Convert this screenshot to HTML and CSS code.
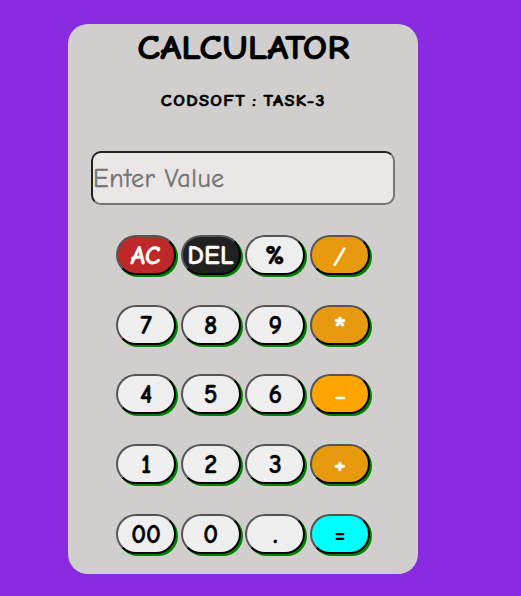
FILE: index.html
```html
<!DOCTYPE html>
<html lang="en">
<head>
<meta charset="utf-8">
<title>Calculator</title>
<link rel="stylesheet" href="styles.css">
</head>
<body>
<main class="calculator">
  <h1 class="title">CALCULATOR</h1>
  <h2 class="subtitle">CODSOFT : TASK-3</h2>
  <input class="display" type="text" placeholder="Enter Value">
  <div class="keys">
    <button class="key clear"><span class="wide slant">AC</span></button>
    <button class="key delete"><span class="wide">DEL</span></button>
    <button class="key"><span class="percent">%</span></button>
    <button class="key operator"><span class="divide">/</span></button>
    <button class="key">7</button>
    <button class="key">8</button>
    <button class="key">9</button>
    <button class="key operator"><span class="times">*</span></button>
    <button class="key">4</button>
    <button class="key">5</button>
    <button class="key">6</button>
    <button class="key operator minus"><span class="sign dash">-</span></button>
    <button class="key">1</button>
    <button class="key">2</button>
    <button class="key">3</button>
    <button class="key operator"><span class="sign">+</span></button>
    <button class="key"><span>00</span></button>
    <button class="key">0</button>
    <button class="key">.</button>
    <button class="key equals"><span class="equal">=</span></button>
  </div>
</main>
</body>
</html>
```
FILE: styles.css
```css
* {
  box-sizing: border-box;
}

body {
  margin: 0;
  padding-top: 24px;
  padding-left: 68px;
  height: 596px;
  overflow: hidden;
  background: blueviolet;
  font-family: "Comic Sans MS", "Comic Neue", "Noto Sans", sans-serif;
}

.calculator {
  width: 350px;
  height: 550px;
  border-radius: 20px;
  background: #d0cfcd;
  display: flex;
  flex-direction: column;
  align-items: center;
}

.title {
  margin: 0;
  height: 46px;
  font-size: 35px;
  line-height: 47px;
  font-weight: 700;
  transform: scaleX(1.09);
  -webkit-text-stroke: 0.7px;
}

.subtitle {
  margin: 21px 0 0;
  height: 20px;
  font-size: 16px;
  line-height: 21px;
  font-weight: 700;
  letter-spacing: 1.2px;
  word-spacing: -1.5px;
  transform: scaleX(1.14);
  -webkit-text-stroke: 0.6px;
}

.display {
  width: 304px;
  height: 54px;
  margin-top: 40px;
  padding: 2px 0 0;
  border: 2px solid;
  border-color: #212121 #767676 #767676 #212121;
  border-radius: 10px;
  background: #ebe7e6;
  font: 26px "Comic Sans MS", "Comic Neue", "Noto Sans", sans-serif;
  letter-spacing: 0.45px;
}

.display::placeholder {
  color: #757575;
  opacity: 1;
  -webkit-text-stroke: 0.4px;
}

.keys {
  display: grid;
  grid-template-columns: repeat(4, 60px);
  column-gap: 4.67px;
  row-gap: 29.7px;
  margin-top: 30px;
}

.key {
  width: 60px;
  height: 40px;
  padding: 0;
  border: 2px solid;
  border-color: #555 #000 #000 #555;
  border-radius: 20px;
  background: #efefef;
  color: #000;
  box-shadow: 2px 2px 0 green;
  font: 700 26px/38px "Comic Sans MS", "Comic Neue", "Noto Sans", sans-serif;
  -webkit-text-stroke: 0.4px;
}

.key span {
  display: inline-block;
}

.clear {
  background: #bd2828;
  color: #fff;
}

.delete {
  background: #212121;
  color: #fff;
}

.operator {
  background: #e79a0d;
  color: #fff;
}

.minus {
  background: orange;
}

.equals {
  background: aqua;
}

.wide {
  transform: scaleX(1.03);
}

.slant {
  transform: skewX(-5deg);
}

.percent {
  transform: scaleX(1.1);
}

.divide {
  transform: scaleY(0.88) skewX(-6deg);
}

.times {
  font-size: 34px;
  transform: translateY(3px);
}

.sign {
  transform: scaleX(1.1);
}

.dash {
  transform: translateY(1px) scale(1.15, 0.85);
}

.equal {
  transform: translateY(1px) scale(0.95, 0.9);
  -webkit-text-stroke: 0;
}
```
